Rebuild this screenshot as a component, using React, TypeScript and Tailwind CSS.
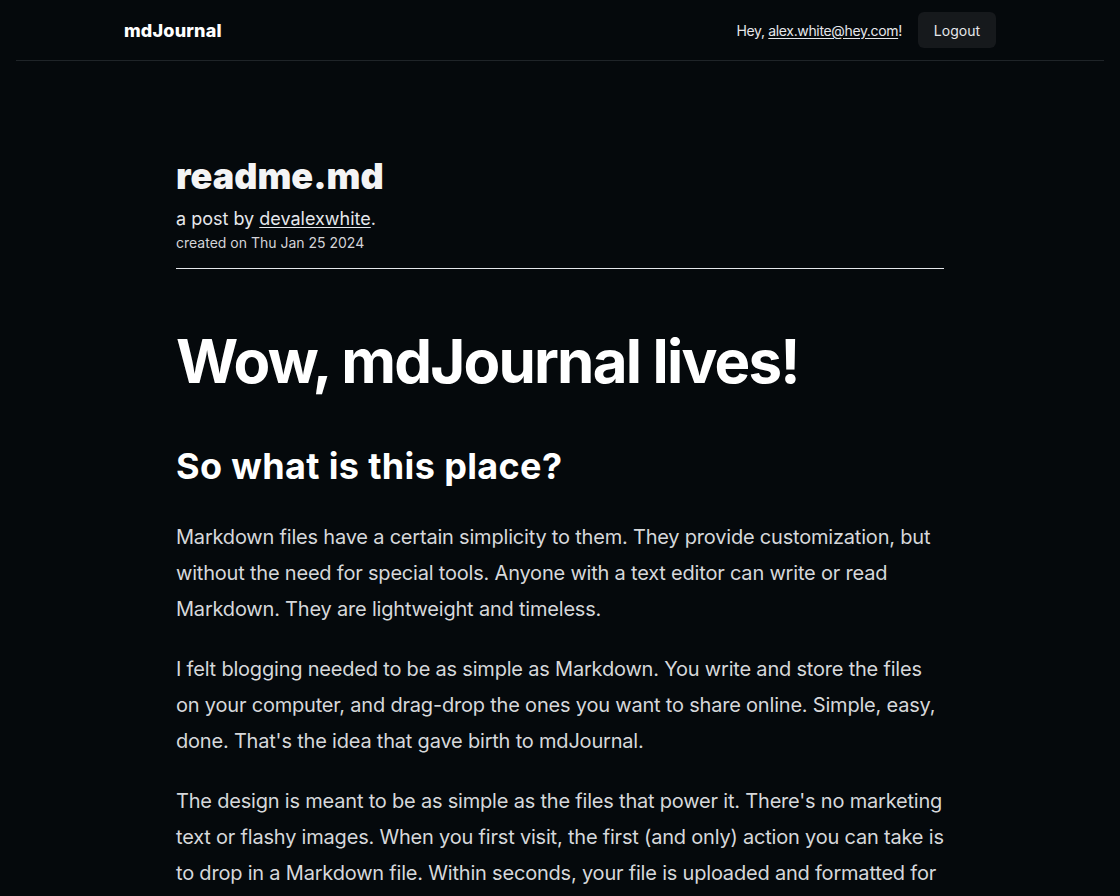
export default function App() {
  return (
    <div className="min-h-screen bg-[#05090c] text-[#d6d8db] px-4" style={{ fontFamily: 'Inter, "Noto Sans", sans-serif' }}>
      <header className="border-b border-[#1f2428]">
        <div className="mx-auto max-w-[896px] px-3 h-[60px] flex items-center justify-between">
          <a className="text-[18px] font-extrabold text-white tracking-[0.01em]">mdJournal</a>
          <div className="flex items-center gap-4 text-[14px]">
            <span className="text-[#e5e7eb] tracking-[-0.025em]">
              Hey, <a className="underline underline-offset-2">alex.white@hey.com</a>!
            </span>
            <button className="h-9 px-4 rounded-md bg-[#16191c] text-[#e5e7eb] text-[14px]">Logout</button>
          </div>
        </div>
      </header>

      <main className="mx-auto max-w-[768px] pt-[95px]">
        <div className="border-b border-[#e5e7eb] pb-[15px]">
          <h1 className="text-[36px] leading-[40px] font-black text-[#f4f4f5]">readme.md</h1>
          <p className="mt-[9px] text-[18px] leading-[28px] text-[#e5e7eb]">
            a post by <a className="underline underline-offset-2">devalexwhite</a>.
          </p>
          <p className="text-[14px] leading-[20px] text-[#d4d4d8]">created on Thu Jan 25 2024</p>
        </div>

        <article className="pt-[62px]">
          <h1 className="text-[60px] leading-[60px] font-bold text-white tracking-[-0.03em]">Wow, mdJournal lives!</h1>
          <h2 className="mt-[55px] text-[36px] leading-[40px] font-bold text-white tracking-[0.01em]">So what is this place?</h2>
          <div className="mt-[33px] flex flex-col gap-6 text-[20px] leading-[36px] tracking-[-0.01em]">
            <p>
              Markdown files have a certain simplicity to them. They provide customization, but without the need for special tools. Anyone with a text editor can write or read Markdown. They are lightweight and timeless.
            </p>
            <p>
              I felt blogging needed to be as simple as Markdown. You write and store the files on your computer, and drag-drop the ones you want to share online. Simple, easy, done. That's the idea that gave birth to mdJournal.
            </p>
            <p>
              The design is meant to be as simple as the files that power it. There's no marketing text or flashy images. When you first visit, the first (and only) action you can take is to drop in a Markdown file. Within seconds, your file is uploaded and formatted for sharing. Your post gets a link you can send to anyone.
            </p>
          </div>
        </article>
      </main>
    </div>
  );
}
